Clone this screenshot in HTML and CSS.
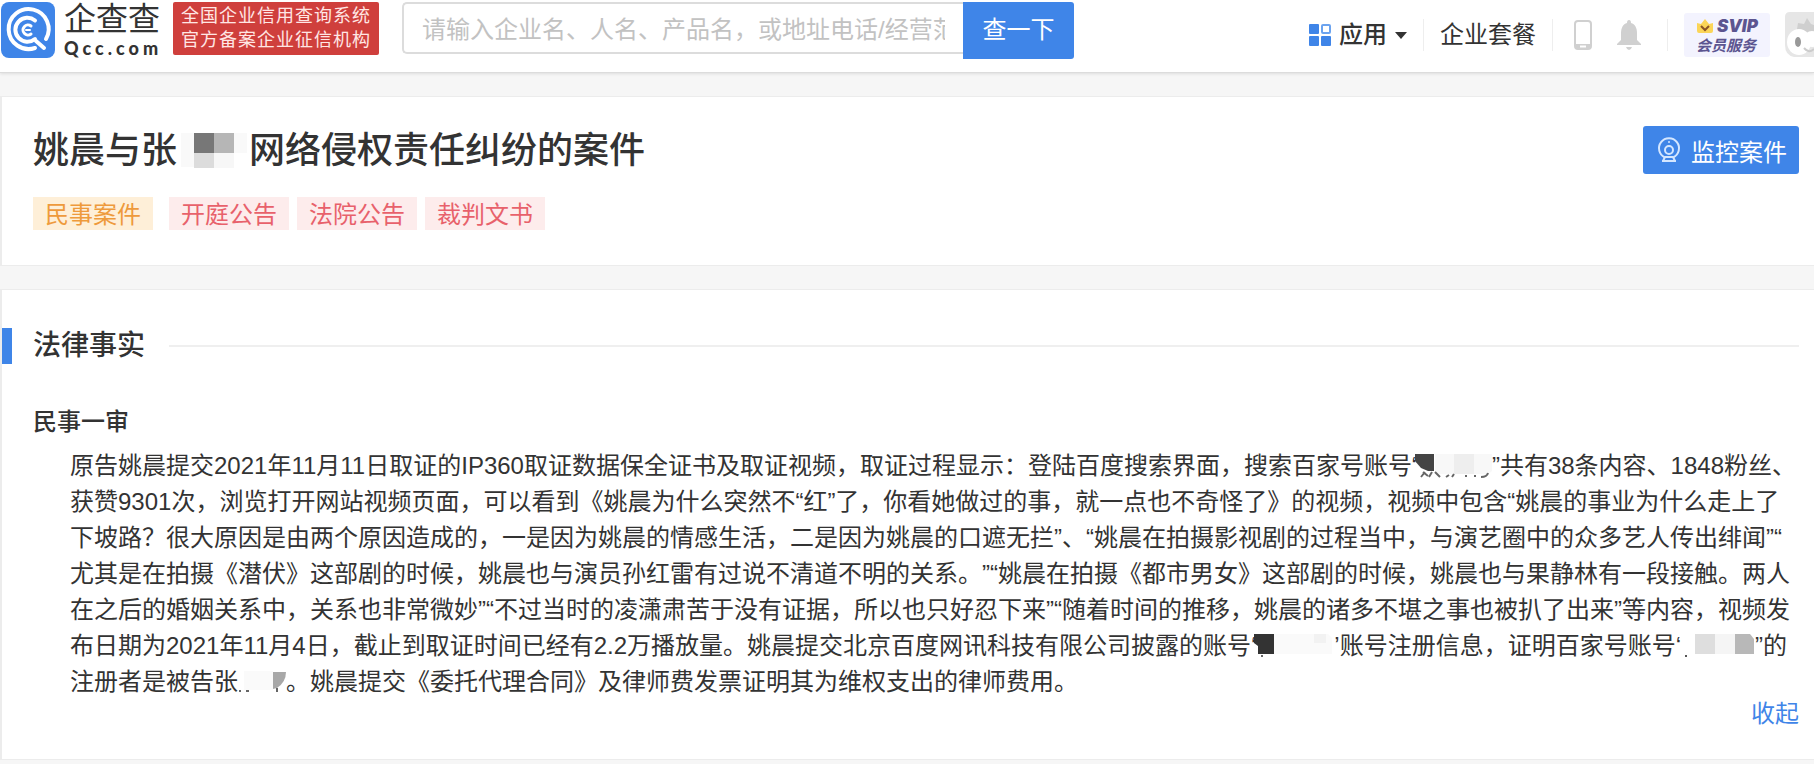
FILE: index.html
```html
<!DOCTYPE html>
<html lang="zh-CN">
<head>
    <meta charset="UTF-8">
    <meta name="viewport" content="width=device-width, initial-scale=1.0">
    <title>企查查 - 案件详情</title>
    <link rel="stylesheet" href="styles.css">
</head>
<body>
    <header class="header">
        <a href="#" class="logo">
            <svg class="logo-mark" viewBox="0 0 56 56" width="56" height="56" aria-hidden="true">
                <rect x="1" y="0" width="54" height="56" rx="8" fill="#3f85e8"/>
                <g fill="none" stroke="#fff" stroke-linecap="round">
                    <path d="M46 37A20 20 0 1 0 35 46" stroke-width="4"/>
                    <path d="M36 39L44 46" stroke-width="4"/>
                    <path d="M35 18.500A12 12 0 1 0 35 37" stroke-width="4"/>
                    <path d="M31 24A5 5 0 1 0 31 32" stroke-width="3"/>
                    <path d="M26 28H30" stroke-width="2"/>
                </g>
            </svg>
            <span class="logo-text">
                <span class="logo-name">企查查</span>
                <span class="logo-domain">Qcc.com</span>
            </span>
            <span class="slogan">全国企业信用查询系统<br>官方备案企业征信机构</span>
        </a>

        <form class="search">
            <input type="text" class="search-input" aria-label="搜索" placeholder="请输入企业名、人名、产品名，或地址电话/经营范围">
            <button type="button" class="search-btn">查一下</button>
        </form>

        <nav class="nav">
            <a href="#" class="nav-apps">
                <svg viewBox="0 0 22 22" width="22" height="22" aria-hidden="true">
                    <g fill="#3f85e8">
                        <rect width="10" height="10" rx="1"/>
                        <rect y="12" width="10" height="10" rx="1"/>
                        <rect x="12" y="12" width="10" height="10" rx="1"/>
                    </g>
                    <rect x="13" y="1" width="8" height="8" rx="1" fill="#fff" stroke="#6ba3ef" stroke-width="2"/>
                </svg>
                <span>应用</span>
                <span class="caret"></span>
            </a>
            <a href="#" class="nav-item">企业套餐</a>
            <div class="nav-icons">
                <a href="#" aria-label="手机版">
                    <svg viewBox="0 0 20 32" width="20" height="32">
                        <rect x="2" y="2" width="16" height="28" rx="3" fill="#fff" stroke="#d0d0d0" stroke-width="2"/>
                        <path d="M2 25H18V28Q18 30 15 30H5Q2 30 2 28Z" fill="#d0d0d0"/>
                        <path d="M7 27.500H13" stroke="#fff" stroke-width="2"/>
                    </svg>
                </a>
                <a href="#" aria-label="消息">
                    <svg viewBox="0 0 24 30" width="24" height="30">
                        <path d="M12 0Q14 0 14 3C18 4 20 8 20 13V20L24 24V25H0V24L4 20V13C4 8 6 4 10 3Q10 0 12 0Z" fill="#d0d0d0"/>
                        <path d="M9 27H15Q14 30 12 30T9 27Z" fill="#d0d0d0"/>
                    </svg>
                </a>
            </div>
            <a href="#" class="svip">
                <span class="svip-top">
                    <svg viewBox="0 0 18 16" width="18" height="16" aria-hidden="true">
                        <path d="M1 5L5 6L9 1L13 6L17 5V13Q17 15 15 15H3Q1 15 1 13Z" fill="#fbd558"/>
                        <path d="M5 8L9 12L13 8" fill="none" stroke="#8a5226" stroke-width="2"/>
                    </svg>
                    <b>SVIP</b>
                </span>
                <span class="svip-text">会员服务</span>
            </a>
            <a href="#" class="avatar" aria-label="我的账号">
                <svg viewBox="0 0 30 48" width="30" height="48">
                    <path d="M6 1H30V46H10Q1 44 1 34V6Q1 1 6 1Z" fill="#e6e6e6"/>
                    <path d="M14 12L20 13L23 7L27 13L30 14V24H12Z" fill="#cfcfcf"/>
                    <ellipse cx="15" cy="31" rx="12" ry="13" fill="#fff"/>
                    <circle cx="28" cy="28" r="8" fill="#fff"/>
                    <ellipse cx="14" cy="31" rx="3" ry="5" fill="#999"/>
                    <path d="M20 37Q25 43 30 38" fill="none" stroke="#ccc" stroke-width="2"/>
                </svg>
            </a>
        </nav>
    </header>

    <main>
        <section class="card case">
            <div>
                <h1>姚晨与张<svg class="mask" viewBox="0 0 72 36" width="72" height="36" aria-hidden="true">
                        <path d="M4 2H17V36H4ZM57 2H70V22H57Z" fill="#f9f9f9"/>
                        <path d="M17 2H37V22H17Z" fill="#777"/>
                        <path d="M37 2H57V22H37Z" fill="#b6b6b6"/>
                        <path d="M17 22H37V37H17Z" fill="#dcdcdc"/>
                        <path d="M37 22H57V37H37Z" fill="#f7f7f7"/>
                    </svg>网络侵权责任纠纷的案件</h1>
                <div class="tags">
                    <span class="tag tag-type">民事案件</span>
                    <span class="tag">开庭公告</span>
                    <span class="tag">法院公告</span>
                    <span class="tag">裁判文书</span>
                </div>
            </div>
            <button type="button" class="monitor-btn">
                <svg viewBox="0 0 24 28" width="24" height="28" fill="none" stroke="#d4e6ff" stroke-width="2" aria-hidden="true">
                    <path d="M8 21.500A10 10 0 1 1 16 21.500"/>
                    <circle cx="12" cy="14" r="4"/>
                    <circle cx="12" cy="6" r="1" fill="#d4e6ff" stroke="none"/>
                    <path d="M8 21H16M8 21L6 25M16 21L18 25M5 25H19"/>
                </svg>
                监控案件
            </button>
        </section>

        <section class="card facts">
            <h2>法律事实</h2>
            <div class="facts-body">
                <h3>民事一审</h3>
                <p>原告姚晨提交2021年11月11日取证的IP360取证数据保全证书及取证视频，取证过程显示：登陆百度搜索界面，搜索百家号账号“<svg class="mask" viewBox="0 0 72 24" width="72" height="24" aria-hidden="true">
                        <path d="M15 0H72V17L68 20H15Z" fill="#f8f8f8"/>
                        <path d="M34 0H54V20H34Z" fill="#eee"/>
                        <path d="M-5 0H14V17L8 17L1 14L-5 7Z" fill="#444"/>
                        <path d="M3 18L8 22M1 23L5 18M12 18L9 23M15 18L20 23M26 23L29 21M32 23L34 20M46 21V23M55 23V21M61 23Q67 23 68 19" fill="none" stroke="#666" stroke-width="2"/>
                    </svg>”共有38条内容、1848粉丝、获赞9301次，浏览打开网站视频页面，可以看到《姚晨为什么突然不“红”了，你看她做过的事，就一点也不奇怪了》的视频，视频中包含“姚晨的事业为什么走上了下坡路？很大原因是由两个原因造成的，一是因为姚晨的情感生活，二是因为姚晨的口遮无拦”、“姚晨在拍摄影视剧的过程当中，与演艺圈中的众多艺人传出绯闻”“尤其是在拍摄《潜伏》这部剧的时候，姚晨也与演员孙红雷有过说不清道不明的关系。”“姚晨在拍摄《都市男女》这部剧的时候，姚晨也与果静林有一段接触。两人在之后的婚姻关系中，关系也非常微妙”“不过当时的凌潇肃苦于没有证据，所以也只好忍下来”“随着时间的推移，姚晨的诸多不堪之事也被扒了出来”等内容，视频发布日期为2021年11月4日，截止到取证时间已经有2.2万播放量。姚晨提交北京百度网讯科技有限公司披露的账号‘<svg class="mask" viewBox="0 0 78 24" width="78" height="24" aria-hidden="true">
                        <path d="M18 0H72L76 4V20H18Z" fill="#fafafa"/>
                        <path d="M58 0H70V9H58Z" fill="#f2f2f2"/>
                        <path d="M-2 0H18V20H2V12L-2 9Z" fill="#333"/>
                        <path d="M5 21H7V23H5Z" fill="#666"/>
                    </svg>’账号注册信息，证明百家号账号‘<svg class="mask" viewBox="0 0 74 24" width="74" height="24" aria-hidden="true">
                        <path d="M4 21H6V23H4Z" fill="#555"/>
                        <path d="M14 0H34V20H14Z" fill="#dedede"/>
                        <path d="M34 0H54V20H34Z" fill="#f5f5f5"/>
                        <path d="M54 0H69L73 5V20H54Z" fill="#b8b8b8"/>
                    </svg>”的注册者是被告张<svg class="mask" viewBox="0 0 48 24" width="48" height="24" aria-hidden="true">
                        <path d="M6 1H35V20H6Z" fill="#fafafa"/>
                        <path d="M35 2H48Q48 12 39 18L35 19Z" fill="#a8a8a8"/>
                        <path d="M1 20H3V22H1ZM8 20H11V22H8ZM38 18H40V22H38Z" fill="#666"/>
                    </svg>。姚晨提交《委托代理合同》及律师费发票证明其为维权支出的律师费用。</p>
                <a href="#" class="collapse">收起</a>
            </div>
        </section>
    </main>
</body>
</html>
```
FILE: styles.css
```css
* {
    box-sizing: border-box;
}
body {
    margin: 0;
    background-color: #f6f6f6;
    color: #333;
    font-family: "Liberation Sans", "Noto Sans CJK SC", sans-serif;
    font-size: 24px;
    line-height: 36px;
    text-spacing-trim: space-all;
    overflow-x: hidden;
}
a {
    color: inherit;
    text-decoration: none;
}
svg {
    display: block;
}
h1, h2, h3, p {
    margin: 0;
}
button {
    border: none;
    border-radius: 3px;
    background-color: #3f85e8;
    color: #fff;
    font-family: inherit;
    font-size: 24px;
    cursor: pointer;
}

.header {
    display: flex;
    align-items: flex-start;
    height: 73px;
    background-color: #fff;
    border-bottom: 1px solid #dcdcdc;
    box-shadow: 0 1px 3px rgba(0, 0, 0, 0.1);
}
.logo {
    display: flex;
    flex-shrink: 0;
    padding-top: 2px;
}
.logo-text {
    display: flex;
    flex-direction: column;
    width: 96px;
    margin: 0 13px 0 8px;
}
.logo-name {
    font-size: 32px;
    line-height: 34px;
}
.logo-domain {
    font-family: Lato, "Liberation Sans", sans-serif;
    font-size: 18px;
    font-weight: 900;
    line-height: 24px;
    letter-spacing: 4px;
    white-space: nowrap;
}
.slogan {
    width: 206px;
    height: 53px;
    padding: 2px 0 2px 8px;
    border-radius: 2px;
    background-color: #cf3f3c;
    color: #ffe6e4;
    font-size: 18px;
    line-height: 24px;
    letter-spacing: 1px;
    white-space: nowrap;
}

.search {
    display: flex;
    align-items: flex-start;
    flex: 0 1 672px;
    margin: 2px 0 0 23px;
}
.search-input {
    flex: 1;
    min-width: 0;
    height: 52px;
    padding: 3px 18px 0 18px;
    border: 2px solid #dcdcdc;
    border-right: none;
    border-radius: 5px 0 0 5px;
    font-family: inherit;
    font-size: 24px;
}
.search-input::placeholder {
    color: #c2c2c2;
}
.search-btn {
    width: 111px;
    height: 57px;
    padding-bottom: 8px;
    border-radius: 0 3px 3px 0;
}

.nav {
    display: flex;
    align-items: center;
    flex-shrink: 0;
    height: 70px;
    margin-left: auto;
}
.nav-apps {
    display: flex;
    align-items: center;
    gap: 8px;
    padding-right: 16px;
    font-weight: 500;
}
.caret {
    border: 6px solid transparent;
    border-top: 7px solid #333;
    border-bottom: none;
}
.nav-item {
    padding: 0 16px;
    border: solid #eee;
    border-width: 0 1px;
    line-height: 32px;
}
.nav-icons {
    display: flex;
    align-items: center;
    gap: 24px;
    padding: 0 26px 0 20px;
    border-right: 1px solid #eee;
}
.svip {
    display: flex;
    flex-direction: column;
    width: 86px;
    height: 44px;
    margin: 0 14px 0 16px;
    padding: 3px 0 0 12px;
    border-radius: 3px;
    background-color: #f3f3fe;
    color: #5c5590;
    font-size: 15px;
    font-style: italic;
    font-weight: bold;
    line-height: 20px;
}
.svip-top {
    display: flex;
    align-items: center;
    gap: 3px;
}
.svip-top b {
    font-family: Inter, sans-serif;
    font-size: 17px;
}

.card {
    border: 1px solid #ececec;
    border-width: 1px 0 1px 2px;
    background-color: #fff;
}
.case {
    display: flex;
    justify-content: space-between;
    align-items: flex-start;
    margin-top: 23px;
    padding: 29px 15px 35px 31px;
}
h1 {
    padding-top: 1px;
    font-size: 36px;
    font-weight: 500;
    line-height: 48px;
}
.mask {
    display: inline-block;
    vertical-align: -4px;
    overflow: visible;
}
.tags {
    display: flex;
    gap: 8px;
    margin-top: 22px;
}
.tag {
    padding: 2px 12px 0;
    background-color: #fdecec;
    color: #e8616b;
    line-height: 31px;
}
.tag-type {
    margin-right: 8px;
    background-color: #feefd8;
    color: #ee9a3c;
}
.monitor-btn {
    display: flex;
    align-items: center;
    gap: 10px;
    height: 48px;
    padding: 0 12px 0 14px;
}

.facts {
    margin-top: 23px;
    padding: 38px 15px 27px 0;
}
h2 {
    display: flex;
    align-items: center;
    border-left: 10px solid #3f85e8;
    padding-left: 21px;
    font-size: 28px;
    font-weight: 500;
}
h2::after {
    content: "";
    flex: 1;
    height: 2px;
    margin-left: 24px;
    background-color: #efefef;
}
.facts-body {
    display: flex;
    flex-direction: column;
    padding: 40px 0 0 31px;
}
h3 {
    font-size: 24px;
    font-weight: 500;
}
.facts-body p {
    margin-top: 8px;
    padding-left: 37px;
    line-break: anywhere;
}
.collapse {
    align-self: flex-end;
    margin-top: -4px;
    color: #3f85e8;
}
```
